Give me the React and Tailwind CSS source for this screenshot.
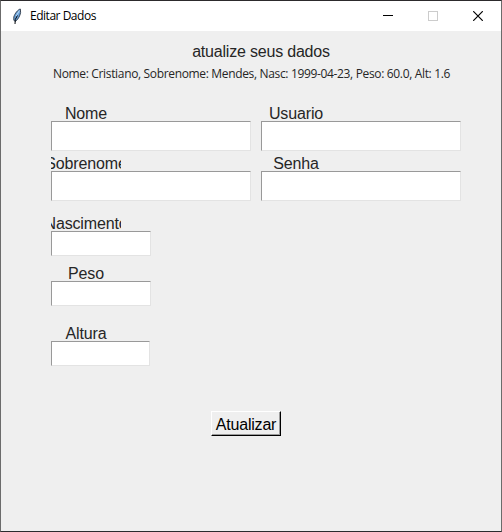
import React from "react";

function Field({ label, box, className = "" }) {
  return (
    <div className={`flex flex-col ${className}`}>
      <div className="flex h-5 w-[70px] justify-center overflow-hidden pt-[3px] text-base leading-5 tracking-[-0.15px] whitespace-nowrap">
        <span className="shrink-0">{label}</span>
      </div>
      <input
        aria-label={label}
        className={`block border border-t-[#999] border-l-[#999] border-r-[#e3e3e3] border-b-[#e3e3e3] bg-white px-1 outline-none ${box}`}
      />
    </div>
  );
}

function Feather() {
  return (
    <svg width="10" height="17" viewBox="0 0 10 17" className="ml-[11px] shrink-0">
      <path d="M8.3 1 C6 1.5 2.8 5.5 1.8 9 L1.8 12 L3 13.5 C5.8 12 8 8 8.6 4.5 Z" fill="#6ba3dc" stroke="#2a3442" strokeWidth="0.9" />
      <path d="M7.4 2.5 L4.2 8" stroke="#b9d8f2" strokeWidth="1" />
      <path d="M5.4 7.5 L3.3 11.5 L3 16" stroke="#05070a" strokeWidth="1" fill="none" />
    </svg>
  );
}

function TitleBar() {
  return (
    <header className="flex h-[30px] items-center bg-white text-black">
      <Feather />
      <h1 className="ml-2 w-[67px] font-['Open_Sans','Noto_Sans',sans-serif] text-[12px] leading-4 tracking-[-0.48px] whitespace-nowrap">
        Editar Dados
      </h1>
      <div className="ml-auto flex items-center gap-[35px] pr-[18px]">
        <svg width="10" height="10" shapeRendering="crispEdges"><path d="M0 4.5H10" stroke="#000" /></svg>
        <svg width="10" height="10" shapeRendering="crispEdges"><rect x=".5" y=".5" width="9" height="9" fill="none" stroke="#ccc" /></svg>
        <svg width="10" height="10"><path d="M.2 .2L9.8 9.8M9.8 .2L.2 9.8" stroke="#000" strokeWidth="1.2" /></svg>
      </div>
    </header>
  );
}

export default function App() {
  return (
    <div className="flex h-[532px] w-[502px] flex-col overflow-hidden border border-t-[#2c2a2c] border-r-[#6b6b6b] border-b-[#2c2c2e] border-l-[#6b6b6b] bg-[#efefef] font-['Liberation_Sans',Arial,sans-serif] text-[#262626]">
      <TitleBar />
      <main className="flex flex-col pl-[50px]">
        <p className="mt-[11px] w-[420px] text-center text-base leading-5 tracking-[-0.2px]">atualize seus dados</p>
        <p className="mt-1 ml-0.5 h-4 font-['Open_Sans','Noto_Sans',sans-serif] text-[12px] leading-4 tracking-[-0.34px] whitespace-nowrap">
          Nome: Cristiano, Sobrenome: Mendes, Nasc: 1999-04-23, Peso: 60.0, Alt: 1.6
        </p>
        <div className="mt-[19px] grid grid-cols-[200px_200px] gap-x-2.5">
          <Field label="Nome" box="h-[30px] w-[200px]" />
          <Field label="Usuario" box="h-[30px] w-[200px]" />
          <Field label="Sobrenome" box="h-[30px] w-[200px]" />
          <Field label="Senha" box="h-[30px] w-[200px]" />
        </div>
        <Field className="mt-2.5" label="Nascimento" box="h-[25px] w-[100px]" />
        <Field className="mt-[5px]" label="Peso" box="h-[25px] w-[100px]" />
        <Field className="mt-[15px]" label="Altura" box="h-[25px] w-[99px]" />
        <button className="mt-[45px] ml-40 flex h-[25px] w-[70px] items-center justify-center border border-t-white border-r-black border-b-black border-l-white bg-[#efefef] pt-0.5 text-base leading-5 tracking-[-0.2px] text-black shadow-[inset_-1px_-1px_0_#9b9b9b]">
          Atualizar
        </button>
      </main>
    </div>
  );
}
